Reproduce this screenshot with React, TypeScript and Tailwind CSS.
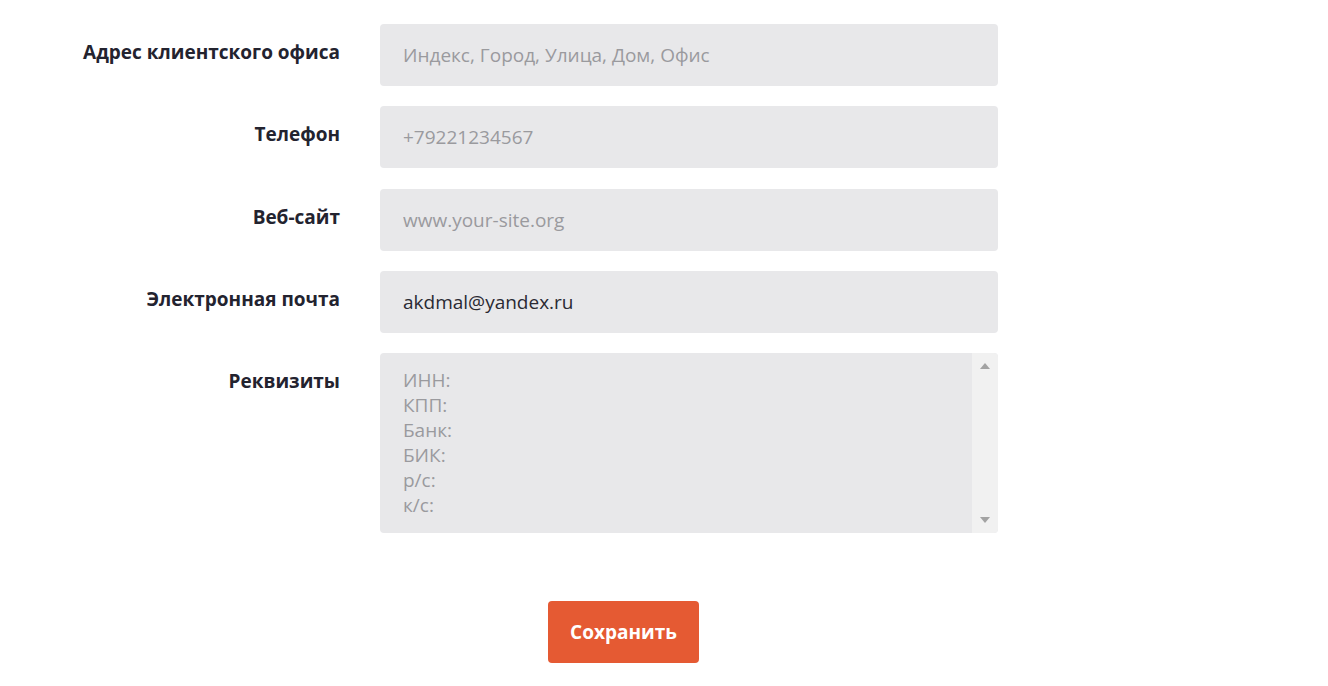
import { useState } from 'react';

const fields = [
  { label: 'Адрес клиентского офиса', placeholder: 'Индекс, Город, Улица, Дом, Офис', value: '' },
  { label: 'Телефон', placeholder: '+79221234567', value: '' },
  { label: 'Веб-сайт', placeholder: 'www.your-site.org', value: '' },
  { label: 'Электронная почта', placeholder: '', value: 'akdmal@yandex.ru' },
];

const requisites = 'ИНН:\nКПП:\nБанк:\nБИК:\nр/с:\nк/с:';

export default function App() {
  const [values, setValues] = useState(fields.map(f => f.value));
  const [details, setDetails] = useState('');

  return (
    <div
      className="min-h-screen bg-white pt-6"
      style={{ fontFamily: '"Open Sans", sans-serif' }}
    >
      <div className="grid grid-cols-[340px_618px] gap-x-10 gap-y-[20.25px]">
        {fields.map((f, i) => (
          <div key={f.label} className="contents">
            <label className="pt-[16px] text-right text-[19px] font-bold leading-6 text-[#23232f]">
              {f.label}
            </label>
            <input
              value={values[i]}
              placeholder={f.placeholder}
              onChange={e => setValues(v => v.map((x, j) => (j === i ? e.target.value : x)))}
              className="h-[62px] rounded bg-[#e8e8ea] px-[23px] text-[19px] text-[#2a2a33] outline-none placeholder:text-[#9a9a9e]"
            />
          </div>
        ))}

        {/* Реквизиты */}
        <label className="pt-[16px] text-right text-[19px] font-bold leading-6 text-[#23232f]">
          Реквизиты
        </label>
        <div className="flex h-[180px] overflow-hidden rounded bg-[#e8e8ea]">
          <textarea
            value={details}
            placeholder={requisites}
            onChange={e => setDetails(e.target.value)}
            className="flex-1 resize-none bg-transparent pl-[23px] pt-[15px] text-[19px] leading-[25px] text-[#2a2a33] outline-none placeholder:text-[#9a9a9e]"
          />
          {/* scrollbar track */}
          <div className="flex w-[26px] flex-col items-center justify-between bg-[#f1f1f1] py-[10px]">
            <div className="h-0 w-0 border-x-[5px] border-b-[6px] border-x-transparent border-b-[#a3a3a3]" />
            <div className="h-0 w-0 border-x-[5px] border-t-[6px] border-x-transparent border-t-[#a3a3a3]" />
          </div>
        </div>
      </div>

      <div className="mt-[68px] pl-[548px]">
        <button className="h-[62px] w-[151px] rounded bg-[#e55a33] text-[19px] font-bold text-white">
          Сохранить
        </button>
      </div>
    </div>
  );
}
